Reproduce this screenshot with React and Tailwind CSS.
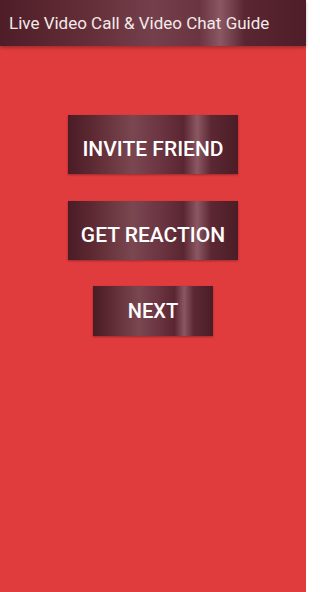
const metal =
  'bg-[linear-gradient(90deg,#4a1c25_0%,#5e2a34_15%,#7a4751_38%,#6a3440_55%,#5a2631_68%,#8a5762_76%,#5c2833_84%,#4b1d26_100%)]';

function MetalButton({ label, wide }) {
  return (
    <button
      className={`${metal} flex items-center justify-center text-white font-medium leading-none shadow-[0_1px_2px_rgba(0,0,0,0.3)] ${
        wide ? 'w-[170px] h-[59px] text-[21px] pt-[9px]' : 'w-[120px] h-[50px] text-[20px]'
      }`}
    >
      {label}
    </button>
  );
}

export default function App() {
  return (
    <div className="w-[306px] h-[592px] bg-[#e03b3d] flex flex-col font-['Roboto','Liberation_Sans',sans-serif]">
      <div className="h-[46px] flex items-center px-[9px] bg-[linear-gradient(90deg,#4e1d27_0%,#652f39_30%,#74404b_50%,#6a3440_65%,#8a5762_72%,#5a2631_80%,#4e1d27_100%)] shadow-[0_2px_3px_rgba(0,0,0,0.25)]">
        <span className="text-[#f3eaea] text-[17px] leading-none">Live Video Call &amp; Video Chat Guide</span>
      </div>
      <div className="flex flex-col items-center mt-[69px]">
        <MetalButton label="INVITE FRIEND" wide />
        <div className="h-[27px]" />
        <MetalButton label="GET REACTION" wide />
        <div className="h-[26px]" />
        <MetalButton label="NEXT" />
      </div>
    </div>
  );
}
